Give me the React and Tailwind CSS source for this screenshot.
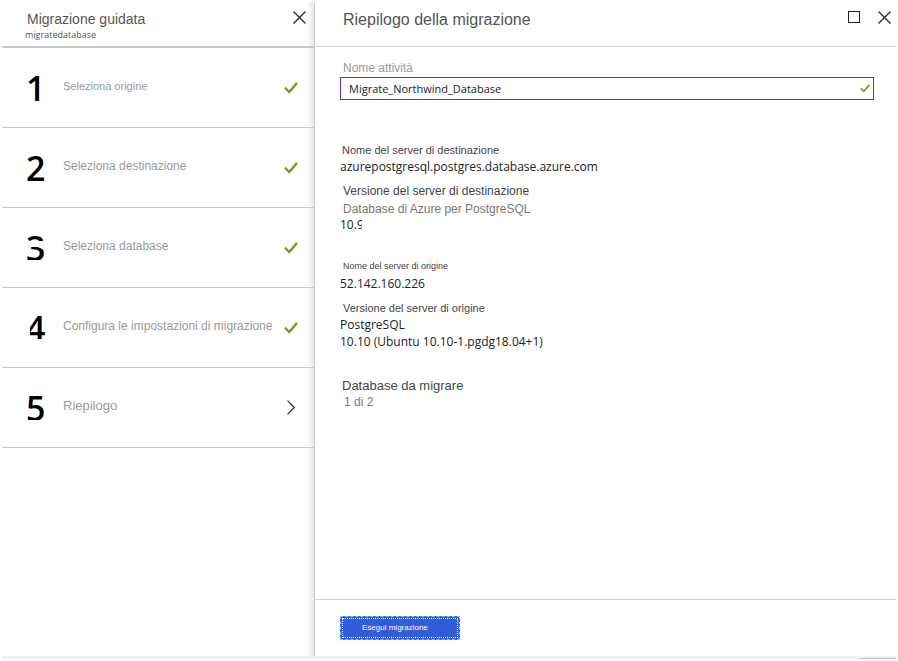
import React from "react";

const sans = "font-['Liberation_Sans',Arial,sans-serif]";
const humanist = "font-['Open_Sans','Noto_Sans',sans-serif]";

function CloseIcon() {
  return (
    <svg className="size-[13px]" viewBox="0 0 13 13" fill="none" stroke="#222" strokeWidth="1.2">
      <path d="M0.5 0.5 L12.5 12.5 M12.5 0.5 L0.5 12.5" />
    </svg>
  );
}

function CheckIcon({ className }) {
  return (
    <svg className={className} viewBox="0 0 14 12" fill="none" stroke="#6ba51f" strokeWidth="2.4">
      <path d="M0.9 5.7 L5.3 10 L13 0.9" />
    </svg>
  );
}

function ChevronIcon() {
  return (
    <svg className="mr-[3px] h-[15px] w-2" viewBox="0 0 8 15" fill="none" stroke="#333" strokeWidth="1.2">
      <path d="M0.5 0.6 L7.3 7.5 L0.5 14.4" />
    </svg>
  );
}

/* The masks trim the edges of the numerals 3, 4 and 5. */
const steps = [
  { n: 1, label: "Seleziona origine", size: "text-[11px]", masks: [] },
  { n: 2, label: "Seleziona destinazione", size: "text-[12px]", masks: [] },
  {
    n: 3,
    label: "Seleziona database",
    size: "text-[12px]",
    masks: ["top-[16px] left-0 h-[6px] w-full", "top-[35px] left-0 h-2 w-full"],
  },
  {
    n: 4,
    label: "Configura le impostazioni di migrazione",
    size: "text-[12px]",
    masks: ["top-[10px] left-0 h-[28px] w-1", "top-[34px] left-0 h-2 w-full"],
  },
  {
    n: 5,
    label: "Riepilogo",
    size: "text-[13px]",
    masks: ["top-[35px] left-0 h-2 w-full"],
    current: true,
  },
];

function Step({ n, label, size, masks, current }) {
  return (
    <li className="border-b border-[#c8c8c8]">
      <button type="button" className="flex h-[79px] w-full items-start pr-4 pl-6 text-left">
        <span className={`relative mt-[17px] w-[26px] shrink-0 text-[34px] leading-[46px] font-semibold text-black ${humanist}`}>
          {n}
          {masks.map((m) => (
            <span key={m} className={`absolute bg-white ${m}`} />
          ))}
        </span>
        <span className={`mt-[30px] ml-[11px] min-w-0 flex-1 leading-4 whitespace-nowrap text-[#999] ${size}`}>{label}</span>
        <span className="mt-8 flex h-[15px] shrink-0 items-center">
          {current ? <ChevronIcon /> : <CheckIcon className="h-3 w-[14px]" />}
        </span>
      </button>
    </li>
  );
}

export default function App() {
  return (
    <div className={`flex min-h-screen flex-col bg-white p-[2px] ${sans}`}>
      <div className="flex flex-1">
        <aside className="w-[313px] shrink-0 border-r border-[#cdcdcd] shadow-[inset_-7px_0_6px_-5px_rgba(0,0,0,0.14)]">
          <header className="flex h-[46px] items-start justify-between border-b-2 border-[#c6c6c6] pr-2 pl-[23px]">
            <div>
              <h1 className="mt-[9px] pl-[2px] text-[14px] leading-4 text-[#555]">Migrazione guidata</h1>
              <p className={`mt-[2px] text-[9px] leading-3 text-[#555] ${humanist}`}>migratedatabase</p>
            </div>
            <button type="button" aria-label="Chiudi" className="mt-[9px]">
              <CloseIcon />
            </button>
          </header>
          <ol>
            {steps.map((s) => (
              <Step key={s.n} {...s} />
            ))}
          </ol>
        </aside>

        <main className="flex min-w-0 flex-1 flex-col">
          <header className="flex h-[45px] items-start border-b border-[#d2d2d2] pr-[5px] pl-7">
            <h2 className="mt-2 flex-1 text-[16px] leading-5 text-[#555]">Riepilogo della migrazione</h2>
            <button type="button" aria-label="Ingrandisci" className="mt-[9px] mr-[18px] size-3 border border-[#222]" />
            <button type="button" aria-label="Chiudi" className="mt-[9px]">
              <CloseIcon />
            </button>
          </header>

          <form className="flex-1 pr-[22px] pl-[25px]">
            <label htmlFor="task" className="mt-[13px] block pl-[3px] text-[12px] leading-4 text-[#999]">
              Nome attività
            </label>
            <div className="mt-px flex h-[23px] items-center border border-[#7a2fa3] pr-[3px] pl-2">
              <input
                id="task"
                defaultValue="Migrate_Northwind_Database"
                className={`min-w-0 flex-1 text-[11px] leading-4 text-[#222] outline-none ${humanist}`}
              />
              <CheckIcon className="h-[9px] w-[10px]" />
            </div>

            <dl className={`mt-[42px] text-[12px] leading-4 text-[#222] ${humanist}`}>
              <dt className={`pl-[2px] text-[11px] text-[#444] ${sans}`}>Nome del server di destinazione</dt>
              <dd className="mt-px">azurepostgresql.postgres.database.azure.com</dd>
              <dt className={`mt-2 pl-[3px] text-[#444] ${sans}`}>Versione del server di destinazione</dt>
              <dd className={`mt-[2px] pl-[3px] text-[#777] ${sans}`}>Database di Azure per PostgreSQL</dd>
              <dd className="w-[22px] overflow-hidden">10.9</dd>
              <dt className={`mt-[25px] pl-[3px] text-[9px] text-[#444] ${sans}`}>Nome del server di origine</dt>
              <dd className="mt-[2px]">52.142.160.226</dd>
              <dt className={`mt-2 pl-[3px] text-[11px] text-[#444] ${sans}`}>Versione del server di origine</dt>
              <dd className="mt-px">PostgreSQL</dd>
              <dd className="mt-px">10.10 (Ubuntu 10.10-1.pgdg18.04+1)</dd>
              <dt className={`mt-7 pl-[2px] text-[13px] text-[#444] ${sans}`}>Database da migrare</dt>
              <dd className={`pl-1 text-[#777] ${sans}`}>1 di 2</dd>
            </dl>
          </form>

          <footer className="border-t border-[#d2d2d2] pt-4 pb-4 pl-[25px]">
            <button type="button" className="block h-6 w-[120px] border border-dashed border-[#7ec4f5] bg-[#325cd8] p-px">
              <span className="flex h-full items-center border border-dotted border-white pl-[19px] text-[8px] leading-3 whitespace-nowrap text-white">
                Esegui migrazione
              </span>
            </button>
          </footer>
        </main>
      </div>
      <div className="flex h-[3px] items-end justify-end bg-[#f0f0f0]">
        <div className="h-px w-9 bg-[#bdbdbd]" />
      </div>
    </div>
  );
}
